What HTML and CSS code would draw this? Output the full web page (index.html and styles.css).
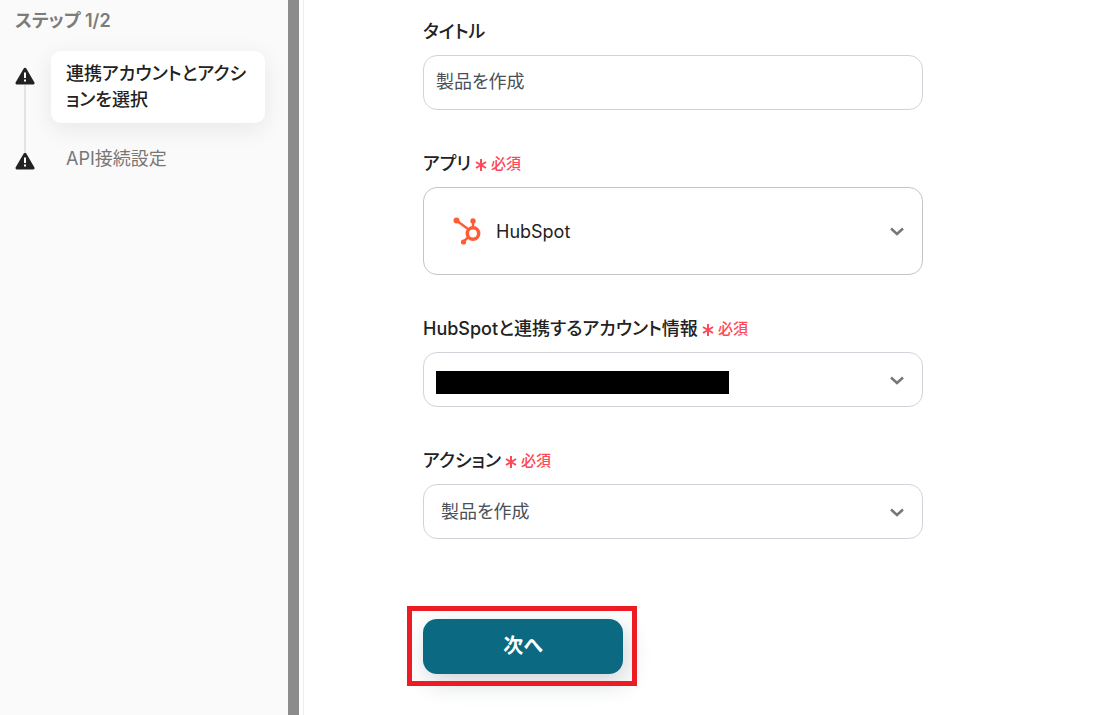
FILE: index.html
```html
<!DOCTYPE html>
<html lang="ja">
<head>
  <meta charset="UTF-8" />
  <meta name="viewport" content="width=device-width, initial-scale=1.0" />
  <title>連携アカウントとアクションを選択</title>
  <link rel="stylesheet" href="styles.css">
</head>
<body>
  <div class="layout">
    <aside class="sidebar">
      <h2 class="sidebar-title">ステップ 1/2</h2>
      <ol class="steps">
        <li class="step active">
          <div class="marker">
            <svg width="20" height="18" viewBox="0 0 20 18"><path d="M10 2.200 18 16H2Z" fill="#222" stroke="#222" stroke-width="3" stroke-linejoin="round"/><path d="M10 5.500v5.500M10 12.500v2" stroke="#fff" stroke-width="2"/></svg>
          </div>
          <a class="step-name" href="#">連携アカウントとアクションを選択</a>
        </li>
        <li class="step">
          <div class="marker">
            <svg width="20" height="18" viewBox="0 0 20 18"><path d="M10 2.200 18 16H2Z" fill="#222" stroke="#222" stroke-width="3" stroke-linejoin="round"/><path d="M10 5.500v5.500M10 12.500v2" stroke="#fff" stroke-width="2"/></svg>
          </div>
          <a class="step-name" href="#">API接続設定</a>
        </li>
      </ol>
    </aside>

    <main class="content">
      <form class="form">
        <div class="field">
          <label for="title">タイトル</label>
          <input class="control" type="text" id="title" value="製品を作成">
        </div>

        <div class="field">
          <label for="app">アプリ<span class="required"><svg class="asterisk" width="12" height="14" viewBox="0 0 12 14"><path d="M6 2v12M1 5l10 6M1 11l10-6"/></svg>必須</span></label>
          <div class="select-box">
            <svg class="app-icon" width="28" height="28" viewBox="0 0 28 28" fill="none" stroke="#ff5c35">
              <path d="M3.500 3.500 15 12M20 4v8M10.500 24.500 15.500 20" stroke-width="2.400"/>
              <circle cx="20" cy="16.500" r="5.700" stroke-width="3.500"/>
              <g fill="#ff5c35" stroke="none">
                <circle cx="3.500" cy="3.500" r="3"/>
                <circle cx="20" cy="4" r="2.700"/>
                <circle cx="10.500" cy="25" r="2.600"/>
              </g>
            </svg>
            <select class="control app-select" id="app">
              <option>HubSpot</option>
            </select>
            <svg class="chevron" width="14" height="9" viewBox="0 0 14 9"><path d="M1 1.500 7 7l6-5.500"/></svg>
          </div>
        </div>

        <div class="field">
          <label for="account">HubSpotと連携するアカウント情報<span class="required"><svg class="asterisk" width="12" height="14" viewBox="0 0 12 14"><path d="M6 2v12M1 5l10 6M1 11l10-6"/></svg>必須</span></label>
          <div class="select-box">
            <select class="control" id="account">
              <option></option>
            </select>
            <span class="mask"></span>
            <svg class="chevron" width="14" height="9" viewBox="0 0 14 9"><path d="M1 1.500 7 7l6-5.500"/></svg>
          </div>
        </div>

        <div class="field">
          <label for="action">アクション<span class="required"><svg class="asterisk" width="12" height="14" viewBox="0 0 12 14"><path d="M6 2v12M1 5l10 6M1 11l10-6"/></svg>必須</span></label>
          <div class="select-box">
            <select class="control action-select" id="action">
              <option>製品を作成</option>
            </select>
            <svg class="chevron" width="14" height="9" viewBox="0 0 14 9"><path d="M1 1.500 7 7l6-5.500"/></svg>
          </div>
        </div>

        <div class="submit">
          <button type="button">次へ</button>
        </div>
      </form>
    </main>
  </div>
</body>
</html>
```

FILE: styles.css
```css
* {
  box-sizing: border-box;
}
body {
  margin: 0;
  font-family: Inter, "Noto Sans CJK JP", sans-serif;
  font-size: 18px;
  font-feature-settings: "palt";
  color: #222;
  background: #fff;
}
.layout {
  display: flex;
  min-height: 100vh;
}

/* sidebar */
.sidebar {
  flex: 0 0 299px;
  padding: 9px 23px 0 15px;
  background: #fafafa;
  border-right: 11px solid #8c8c8c;
}
.sidebar-title {
  margin: 0 0 18px;
  font-size: 18px;
  line-height: 24px;
  font-weight: 600;
  color: #7c7c7c;
}
.steps {
  list-style: none;
  margin: 0;
  padding: 0;
}
.step {
  display: flex;
  gap: 16px;
}
.marker {
  display: flex;
  flex-direction: column;
  align-items: center;
  flex: 0 0 20px;
}
.marker::before {
  content: "";
  width: 2px;
  height: 16px;
  background: #e3e3e3;
}
.active .marker::before {
  background: none;
}
.active .marker::after {
  content: "";
  width: 2px;
  flex: 1;
  background: #e3e3e3;
}
.step-name {
  flex: 1;
  padding: 10px 15px;
  line-height: 26px;
  color: #777;
  text-decoration: none;
}
.active .step-name {
  margin-bottom: 13px;
  background: #fff;
  border-radius: 10px;
  box-shadow: 0 6px 24px rgba(0,0,0,0.08);
  color: #222;
  font-weight: 500;
}

/* form */
.content {
  flex: 1;
  margin-left: 4px;
  padding: 20px 24px 40px 119px;
  border-left: 1px solid #eee;
}
.form {
  max-width: 500px;
}
.field {
  margin-bottom: 42px;
}
label {
  display: flex;
  align-items: center;
  margin-bottom: 11px;
  line-height: 24px;
  font-weight: 500;
}
.required {
  display: flex;
  align-items: center;
  gap: 4px;
  margin-left: 4px;
  font-size: 15px;
  font-weight: 500;
  color: #ff4757;
}
.asterisk {
  fill: none;
  stroke: #ff4757;
  stroke-width: 2;
}
.control {
  display: block;
  width: 100%;
  height: 55px;
  padding: 0 12px;
  border: 1px solid #d0d4da;
  border-radius: 14px;
  background: #fff;
  font: inherit;
  font-feature-settings: inherit;
  color: #495057;
  appearance: none;
}
input.control {
  padding-bottom: 5px;
}
.select-box {
  position: relative;
}
.app-select {
  height: 88px;
  padding-left: 72px;
  border-color: #c4c4c4;
  color: #222;
}
.action-select {
  padding-left: 17px;
}
.app-icon {
  position: absolute;
  left: 30px;
  top: 30px;
}
.chevron {
  position: absolute;
  right: 19px;
  top: calc(50% - 4px);
  fill: none;
  stroke: #777;
  stroke-width: 2.5;
  pointer-events: none;
}
.mask {
  position: absolute;
  left: 13px;
  top: 19px;
  width: 293px;
  height: 23px;
  background: #000;
}

.submit {
  position: relative;
  width: 200px;
  margin-top: 80px;
}
.submit button {
  width: 100%;
  height: 55px;
  padding: 0 0 4px;
  border: none;
  border-radius: 14px;
  background: #0b6982;
  box-shadow: 4px 8px 24px rgba(20,40,60,0.2);
  font: inherit;
  font-feature-settings: inherit;
  font-size: 20px;
  font-weight: 600;
  color: #fff;
  cursor: pointer;
}
/* red frame around the button */
.submit::after {
  content: "";
  position: absolute;
  inset: -13px -14px -12px -16px;
  border: 5px solid #ed1c24;
  pointer-events: none;
}
```
